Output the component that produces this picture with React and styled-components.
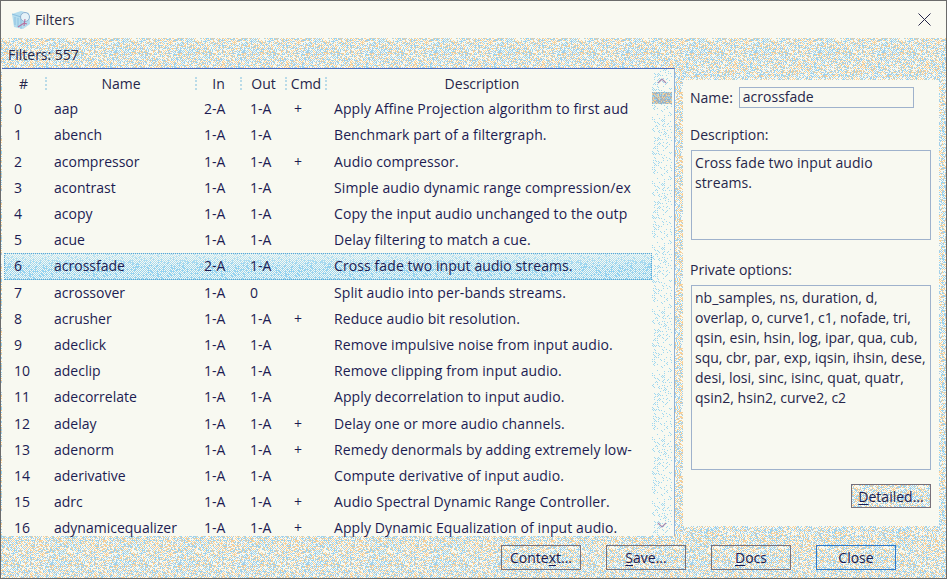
import React from "react";
import styled, { createGlobalStyle, css } from "styled-components";

const filters = [
  ["0", "aap", "2-A", "1-A", "+", "Apply Affine Projection algorithm to first aud"],
  ["1", "abench", "1-A", "1-A", "", "Benchmark part of a filtergraph."],
  ["2", "acompressor", "1-A", "1-A", "+", "Audio compressor."],
  ["3", "acontrast", "1-A", "1-A", "", "Simple audio dynamic range compression/ex"],
  ["4", "acopy", "1-A", "1-A", "", "Copy the input audio unchanged to the outp"],
  ["5", "acue", "1-A", "1-A", "", "Delay filtering to match a cue."],
  ["6", "acrossfade", "2-A", "1-A", "", "Cross fade two input audio streams."],
  ["7", "acrossover", "1-A", "0", "", "Split audio into per-bands streams."],
  ["8", "acrusher", "1-A", "1-A", "+", "Reduce audio bit resolution."],
  ["9", "adeclick", "1-A", "1-A", "", "Remove impulsive noise from input audio."],
  ["10", "adeclip", "1-A", "1-A", "", "Remove clipping from input audio."],
  ["11", "adecorrelate", "1-A", "1-A", "", "Apply decorrelation to input audio."],
  ["12", "adelay", "1-A", "1-A", "+", "Delay one or more audio channels."],
  ["13", "adenorm", "1-A", "1-A", "+", "Remedy denormals by adding extremely low-"],
  ["14", "aderivative", "1-A", "1-A", "", "Compute derivative of input audio."],
  ["15", "adrc", "1-A", "1-A", "+", "Audio Spectral Dynamic Range Controller."],
  ["16", "adynamicequalizer", "1-A", "1-A", "+", "Apply Dynamic Equalization of input audio."],
];

const privateOptions = [
  "nb_samples, ns, duration, d,",
  "overlap, o, curve1, c1, nofade, tri,",
  "qsin, esin, hsin, log, ipar, qua, cub,",
  "squ, cbr, par, exp, iqsin, ihsin, dese,",
  "desi, losi, sinc, isinc, quat, quatr,",
  "qsin2, hsin2, curve2, c2",
];

// the screenshot is colour-reduced, so its surfaces are pixel dithers: build a vector tile for them
const ditherTile = (colors, keep) => {
  let state = 12345;
  const next = () => {
    state = (state + 0x6d2b79f5) | 0;
    let t = Math.imul(state ^ (state >>> 15), 1 | state);
    t = (t + Math.imul(t ^ (t >>> 7), 61 | t)) ^ t;
    return ((t ^ (t >>> 14)) >>> 0) / 4294967296;
  };
  let rects = "";
  for (let y = 0; y < 64; y++) {
    for (let x = 0; x < 64; x++) {
      const pick = next();
      const roll = next();
      if (!keep(x, y, roll)) continue;
      const color = colors[Math.floor(pick * colors.length)];
      rects += `<rect x="${x}" y="${y}" width="1" height="1" fill="${color}"/>`;
    }
  }
  const svg = `<svg xmlns="http://www.w3.org/2000/svg" width="64" height="64" shape-rendering="crispEdges">${rects}</svg>`;
  return `url("data:image/svg+xml,${encodeURIComponent(svg)}")`;
};

const checker = (x, y) => (x + y) % 2 === 0;

const surfaceTile = ditherTile(
  ["#f8d098", "#9cd4f0", "#f8d098", "#9cd4f0", "#b0cce0"],
  (x, y, roll) => roll < (checker(x, y) ? 0.8 : 0.3)
);
const selectedTile = ditherTile(["#98d4f0"], (x, y, roll) => checker(x, y) || roll < 0.2);
const trackTile = ditherTile(["#a0d8f0"], (x, y, roll) => checker(x, y) && roll < 0.25);
const thumbTile = ditherTile(["#f8d098", "#9cd4f0", "#b8b8b4", "#98b0c4"], () => true);

const dither = css`
  background-color: #f8f9f1;
  background-image: ${surfaceTile};
`;

const GlobalStyle = createGlobalStyle`
  html, body { margin: 0; padding: 0; }
  body {
    font-family: "Open Sans", "Noto Sans", sans-serif;
    font-size: 14px;
    color: #1c1c52;
  }
`;

const Window = styled.div`
  width: 947px;
  height: 579px;
  box-sizing: border-box;
  border: 1px solid #6b6b6b;
  display: flex;
  flex-direction: column;
  overflow: hidden;
`;

const TitleBar = styled.div`
  height: 37px;
  flex: none;
  background: #f9f9f1;
  display: flex;
  align-items: center;
  padding: 0 15px 0 10px;
  gap: 4px;
`;

const TitleText = styled.span`
  flex: 1;
  font-size: 14px;
  color: #2a2a44;
`;

const Body = styled.div`
  flex: 1;
  min-height: 0;
  ${dither}
  display: flex;
  flex-direction: column;
  padding: 0 7px 0 1px;
`;

const Count = styled.div`
  height: 30px;
  flex: none;
  display: flex;
  align-items: center;
  padding: 3px 0 0 6px;
  color: #26264a;
  box-sizing: border-box;
`;

const Main = styled.div`
  display: flex;
  align-items: flex-start;
`;

const ListBox = styled.div`
  width: 673px;
  height: 468px;
  flex: none;
  box-sizing: border-box;
  background: #f8f9f1;
  border-top: 1px solid #4a6cc0;
  border-right: 1px solid #8fb0d8;
  display: flex;
`;

const Table = styled.div`
  flex: 1;
  min-width: 0;
`;

const HeaderRow = styled.div`
  display: grid;
  grid-template-columns: 45px 150px 45px 45px 40px 1fr;
  height: 28px;
  align-items: center;
`;

const HeaderCell = styled.div`
  text-align: center;
  color: #26264a;
  line-height: 13px;
  border-right: 2px dotted ${(p) => (p.$last ? "transparent" : "#b9dbe8")};
  padding-right: ${(p) => (p.$last ? 13 : 0)}px;
`;

const Rows = styled.div`
  display: grid;
  grid-auto-rows: 26.19px;
  margin-top: -0.8px;
  padding-left: 2px;
`;

const Row = styled.div`
  display: grid;
  grid-template-columns: 43px 150px 44px 45px 42px 1fr;
  align-items: center;
  white-space: nowrap;
  line-height: 16px;
  ${(p) =>
    p.$selected &&
    css`
      background-color: #f8f9f1;
      background-image: linear-gradient(#f8f9f180, #f8f9f100 50%), ${selectedTile};
      outline: 1px dotted #5aa6d4;
      outline-offset: -1px;
    `}
`;

const Cell = styled.div`
  padding-left: ${(p) => p.$pad}px;
  letter-spacing: ${(p) => (p.$wide ? "0.1px" : "normal")};
`;

const Scrollbar = styled.div`
  width: 20px;
  flex: none;
  margin-right: 2px;
  background-image: ${trackTile};
  display: flex;
  flex-direction: column;
  align-items: center;
`;

const ScrollEnd = styled.div`
  height: ${(p) => p.$h}px;
  flex: none;
  display: flex;
  align-items: center;
  margin-top: ${(p) => (p.$bottom ? "auto" : 0)};
`;

const Thumb = styled.div`
  width: 20px;
  height: 12px;
  flex: none;
  background-image: ${thumbTile};
`;

const Side = styled.div`
  width: 256px;
  height: 446px;
  margin: 12px 0 0 8px;
  flex: none;
  box-sizing: border-box;
  background: #f8f9f1;
  padding: 7px 8px 0;
  display: flex;
  flex-direction: column;
  color: #26264a;
`;

const NameRow = styled.div`
  display: flex;
  align-items: center;
  gap: 6px;
  margin-left: -1px;
`;

const NameBox = styled.div`
  width: 175px;
  height: 21px;
  box-sizing: border-box;
  border: 1px solid #9fb2cc;
  padding-left: 3px;
  line-height: 18px;
`;

const Label = styled.div`
  margin-top: ${(p) => p.$top}px;
  margin-left: -1px;
  line-height: 20px;
`;

const TextBox = styled.div`
  height: ${(p) => p.$h}px;
  box-sizing: border-box;
  margin-top: 5px;
  border: 1px solid #9fb2cc;
  padding: 2px 3px;
  line-height: 20px;
  white-space: pre;
  letter-spacing: ${(p) => (p.$wide ? "0.1px" : "normal")};
`;

const Button = styled.div`
  width: 80px;
  height: ${(p) => p.$h || 25}px;
  box-sizing: border-box;
  border: 1px solid ${(p) => (p.$primary ? "#2f78c8" : "#77707a")};
  ${dither}
  display: flex;
  align-items: center;
  justify-content: center;
  color: #1c1c52;
`;

const DetailRow = styled.div`
  display: flex;
  justify-content: flex-end;
  margin-top: 14px;
`;

const Footer = styled.div`
  display: flex;
  gap: 25px;
  margin: 9px 0 0 499px;
`;

const Mnemonic = styled.span`
  text-decoration: underline;
  text-underline-offset: 2px;
`;

const AppIcon = () => (
  <svg width="20" height="20" viewBox="0 0 20 20">
    <path d="M1 4 L10 1 L18 3 L19 14 L12 19 L3 17 Z" fill="#b4dcee" />
    <path d="M1 4 L10 7 L10 19 M4 7 L4 15 M7 8 L7 17" fill="none" stroke="#8cc0e0" />
    <circle cx="14" cy="7" r="4.5" fill="#e6f2f8" stroke="#8fb0d0" />
    <path d="M7 17 L13 13 L16 14 M14 9 L13 16" fill="none" stroke="#b8709c" strokeWidth="1.1" />
  </svg>
);

const CloseIcon = () => (
  <svg width="13" height="13" viewBox="0 0 13 13">
    <path d="M0.5 0.5 L12.5 12.5 M12.5 0.5 L0.5 12.5" stroke="#26264a" fill="none" />
  </svg>
);

const Chevron = ({ down }) => (
  <svg width="10" height="6" viewBox="0 0 10 6">
    <path
      d={down ? "M1 1 L5 5 L9 1" : "M1 5 L5 1 L9 5"}
      stroke="#a48ab0"
      strokeWidth="1.2"
      fill="none"
    />
  </svg>
);

const App = () => {
  return (
    <Window>
      <GlobalStyle />
      <TitleBar>
        <AppIcon />
        <TitleText>Filters</TitleText>
        <CloseIcon />
      </TitleBar>
      <Body>
        <Count>Filters: 557</Count>
        <Main>
          <ListBox>
            <Table>
              <HeaderRow>
                <HeaderCell>#</HeaderCell>
                <HeaderCell>Name</HeaderCell>
                <HeaderCell>In</HeaderCell>
                <HeaderCell>Out</HeaderCell>
                <HeaderCell>Cmd</HeaderCell>
                <HeaderCell $last>Description</HeaderCell>
              </HeaderRow>
              <Rows>
                {filters.map((f) => (
                  <Row key={f[0]} $selected={f[0] === "6"}>
                    <Cell $pad={10}>{f[0]}</Cell>
                    <Cell $pad={7}>{f[1]}</Cell>
                    <Cell $pad={7}>{f[2]}</Cell>
                    <Cell $pad={9}>{f[3]}</Cell>
                    <Cell $pad={8}>{f[4]}</Cell>
                    <Cell $pad={6} $wide>
                      {f[5]}
                    </Cell>
                  </Row>
                ))}
              </Rows>
            </Table>
            <Scrollbar>
              <ScrollEnd $h={23}>
                <Chevron />
              </ScrollEnd>
              <Thumb />
              <ScrollEnd $h={22} $bottom>
                <Chevron down />
              </ScrollEnd>
            </Scrollbar>
          </ListBox>
          <Side>
            <NameRow>
              Name:
              <NameBox>acrossfade</NameBox>
            </NameRow>
            <Label $top={17}>Description:</Label>
            <TextBox $h={90} $wide>
              {"Cross fade two input audio\nstreams."}
            </TextBox>
            <Label $top={20}>Private options:</Label>
            <TextBox $h={185}>{privateOptions.join("\n")}</TextBox>
            <DetailRow>
              <Button $h={24}>
                <span>
                  <Mnemonic>D</Mnemonic>etailed...
                </span>
              </Button>
            </DetailRow>
          </Side>
        </Main>
        <Footer>
          <Button>
            <span>
              Conte<Mnemonic>x</Mnemonic>t...
            </span>
          </Button>
          <Button>
            <span>
              <Mnemonic>S</Mnemonic>ave...
            </span>
          </Button>
          <Button>
            <span>
              <Mnemonic>D</Mnemonic>ocs
            </span>
          </Button>
          <Button $primary>Close</Button>
        </Footer>
      </Body>
    </Window>
  );
};

export default App;
